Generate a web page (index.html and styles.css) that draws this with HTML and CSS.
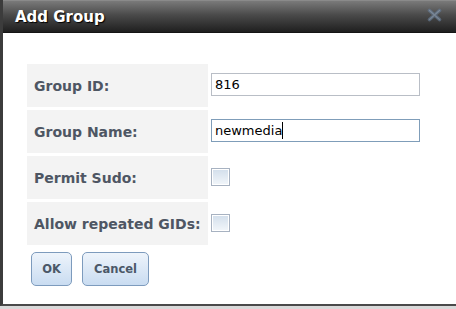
FILE: index.html
```html
<!DOCTYPE html>
<html lang="en">

<head>
    <meta charset="UTF-8">
    <title>Add Group</title>
    <link rel="stylesheet" href="styles.css">
</head>

<body>
    <div class="dialog">
        <header class="dialog-title">
            <span class="title-text">Add Group</span>
            <svg class="close-icon" width="17" height="14" viewBox="0 0 17 14">
                <path d="M3.5 2.5 L13.5 11.5 M13.5 2.5 L3.5 11.5" stroke="#62758c" stroke-width="3.6" stroke-linecap="round" />
                <path d="M3.5 2.5 L13.5 11.5 M13.5 2.5 L3.5 11.5" stroke="#8ea0b5" stroke-width="1.2" stroke-linecap="round" />
            </svg>
        </header>
        <div class="dialog-body">
            <table class="form-table">
                <tr>
                    <th>Group ID:</th>
                    <td><input type="text" class="text-input" value="816"></td>
                </tr>
                <tr>
                    <th>Group Name:</th>
                    <td><div class="text-input focused">newmedia<span class="caret"></span></div></td>
                </tr>
                <tr>
                    <th>Permit Sudo:</th>
                    <td><input type="checkbox" class="check"></td>
                </tr>
                <tr>
                    <th>Allow repeated GIDs:</th>
                    <td><input type="checkbox" class="check"></td>
                </tr>
            </table>
            <div class="buttons">
                <button class="btn">OK</button>
                <button class="btn">Cancel</button>
            </div>
        </div>
    </div>
    <div class="page-behind">
        <span>man</span>
        <span>true</span>
    </div>
</body>

</html>
```
FILE: styles.css
```css
/* General Styles */
body {
    margin: 0;
    padding: 0;
    background: #d9d9d9;
    font-family: "DejaVu Sans", Verdana, sans-serif;
    overflow: hidden;
}

.dialog {
    width: 453px;
    border-left: 3px solid #3c3c3c;
    border-bottom: 2px solid #4a4a4a;
    background: #fff;
}

/* Title bar */
.dialog-title {
    display: flex;
    align-items: center;
    justify-content: space-between;
    padding: 0 13px 0 12px;
    background: linear-gradient(to bottom, #7a7a7a, #4a4a4a 45%, #1f1f1f);
    border-top: 1px solid #8a8a8a;
    border-bottom: 1px solid #151515;
    box-sizing: border-box;
    height: 33px;
}

.title-text {
    color: #fff;
    font-weight: bold;
    font-size: 15px;
    text-shadow: 1px 1px 1px #000;
    padding-top: 1px;
}

.close-icon {
    opacity: 0.7;
    margin-top: -3px;
}

/* Form */
.dialog-body {
    padding: 28px 0 0 21px;
    box-sizing: border-box;
    height: 271px;
}

.form-table {
    border-spacing: 3px;
    border-collapse: separate;
}

.form-table th {
    width: 174px;
    height: 43px;
    padding: 0 0 0 7px;
    background: #f3f3f3;
    text-align: left;
    font-size: 14px;
    font-weight: bold;
    color: #4e5663;
}

.form-table td {
    padding: 0;
    vertical-align: middle;
}

.text-input {
    display: block;
    width: 209px;
    height: 23px;
    box-sizing: border-box;
    margin: 0 0 2px;
    padding: 0 3px;
    border: 1px solid #b9bec6;
    font-family: "DejaVu Sans", Verdana, sans-serif;
    font-size: 13px;
    line-height: 21px;
    color: #000;
    background: #fff;
    outline: none;
}

.text-input.focused {
    border-color: #7f9db9;
}

.caret {
    display: inline-block;
    width: 1px;
    height: 17px;
    background: #000;
    vertical-align: -4px;
}

.check {
    appearance: none;
    -webkit-appearance: none;
    display: block;
    width: 19px;
    height: 18px;
    margin: 0 0 2px;
    box-sizing: border-box;
    border: 1px solid #a7b2c1;
    box-shadow: inset 0 0 0 1px #fff;
    background: linear-gradient(to bottom, #d2deeb, #f2f6fa);
}

/* Buttons */
.buttons {
    display: flex;
    gap: 10px;
    padding: 4px 0 0 7px;
}

.btn {
    height: 34px;
    padding: 0 10px;
    min-width: 41px;
    border: 1px solid #7d9bbd;
    border-radius: 5px;
    background: linear-gradient(to bottom, #eef4fb, #c9dcf1);
    font-family: "DejaVu Sans", Verdana, sans-serif;
    font-size: 11.5px;
    font-weight: bold;
    color: #4b5868;
}

.btn + .btn {
    padding: 0 11px;
}

/* Page behind the dialog */
.page-behind {
    display: flex;
    justify-content: space-between;
    padding: 1px 46px 0 7px;
    font-size: 11px;
    color: #444;
}
```
